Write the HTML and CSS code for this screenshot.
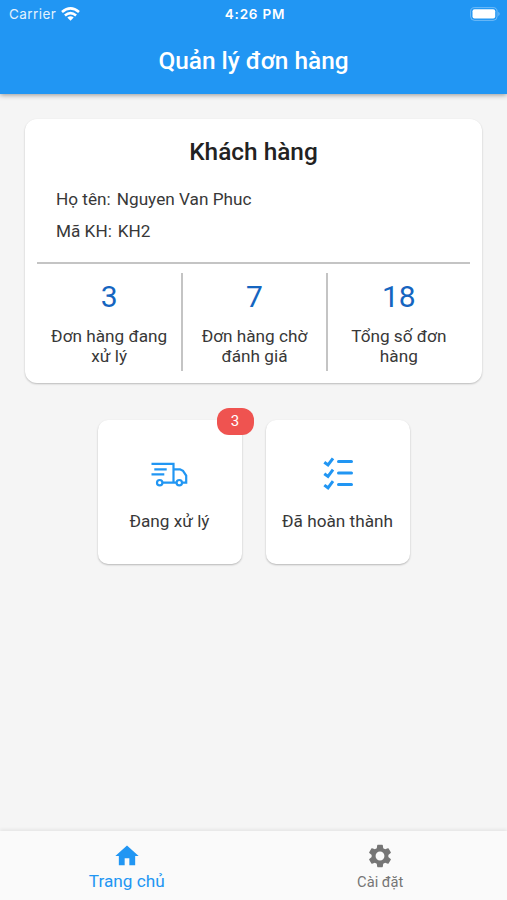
FILE: index.html
```html
<!DOCTYPE html>
<html lang="vi">
<head>
<meta charset="utf-8">
<meta name="viewport" content="width=device-width, initial-scale=1">
<title>Quản lý đơn hàng</title>
<link rel="stylesheet" href="styles.css">
</head>
<body>
<div class="app">
  <header class="header">
    <div class="status">
      <div class="carrier"><span>Carrier</span>
        <svg width="19" height="14" viewBox="0 0 19 14" fill="none" stroke="#fff" stroke-width="2.600"><path d="M1 5.100Q9.500-2.200 18 5.100M3.900 8.400Q9.500 3.700 15.100 8.400"/><path d="M6.300 10.500Q9.500 7.800 12.700 10.500L9.500 13.800z" fill="#fff" stroke="none"/></svg>
      </div>
      <span class="time">4:26 PM</span>
      <svg class="battery" width="31" height="14" viewBox="0 0 31 14"><rect x=".6" y=".6" width="26.500" height="12.800" rx="4" fill="none" stroke="#fff" stroke-opacity=".35"/><rect x="2.500" y="2.300" width="22.700" height="9.300" rx="2" fill="#fff"/><path d="M28.500 4.800q2 2.200 0 4.400z" fill="#fff" fill-opacity=".5"/></svg>
    </div>
    <h1 class="title">Quản lý đơn hàng</h1>
  </header>
  <main class="main">
    <section class="card">
      <h2 class="card-title">Khách hàng</h2>
      <p class="info"><span>Họ tên:</span><span>Nguyen Van Phuc</span></p>
      <p class="info"><span>Mã KH:</span><span>KH2</span></p>
      <div class="stats">
        <div class="stat"><div class="num">3</div><div class="label">Đơn hàng đang<br>xử lý</div></div>
        <div class="stat"><div class="num">7</div><div class="label">Đơn hàng chờ<br>đánh giá</div></div>
        <div class="stat"><div class="num">18</div><div class="label">Tổng số đơn<br>hàng</div></div>
      </div>
    </section>
    <div class="tiles">
      <div class="tile">
        <span class="badge">3</span>
        <svg width="38" height="36" viewBox="151 455 38 36" fill="none" stroke="#2196f3" stroke-width="2.200"><path d="M151.500 463.800H173.500V482.700H162.800M154.300 469.400H166.700M151.500 474.400H164.300M173.500 469.300H180L183 470.900L186.200 475.700V482.700H182.500M173.500 482.700H176"/><circle cx="159.700" cy="482.700" r="2.700"/><circle cx="179.300" cy="482.700" r="2.700"/></svg>
        <span class="tile-label">Đang xử lý</span>
      </div>
      <div class="tile">
        <svg width="38" height="36" viewBox="319 455 38 36" fill="none" stroke="#2196f3" stroke-width="3" stroke-linecap="round"><path d="M338.500 461.600H351.500M338.500 473H351.500M338.500 484.400H351.500"/><path stroke-linecap="butt" d="M324.300 462.300L328 465L333 458.300M324.300 473.700L328 476.400L333 469.700M324.300 485.100L328 487.800L333 481.100"/></svg>
        <span class="tile-label">Đã hoàn thành</span>
      </div>
    </div>
  </main>
  <nav class="tabs">
    <div class="tab active">
      <svg width="28" height="28" viewBox="0 0 24 24" fill="currentColor"><path d="M10 20v-6h4v6h5v-8h3L12 3 2 12h3v8z"/></svg>
      <span>Trang chủ</span>
    </div>
    <div class="tab">
      <svg width="28" height="28" viewBox="0 0 24 24" fill="currentColor"><path d="M19.140 12.940c.04-.3.060-.61.060-.94 0-.32-.02-.64-.07-.94l2.030-1.580c.18-.14.230-.41.120-.61l-1.920-3.320c-.12-.22-.37-.29-.59-.22l-2.390.96c-.5-.38-1.030-.7-1.620-.94l-.36-2.540c-.04-.24-.24-.41-.48-.41h-3.840c-.24 0-.43.170-.47.410l-.36 2.540c-.59.240-1.130.570-1.620.940l-2.390-.96c-.22-.08-.47 0-.59.220L2.740 8.870c-.12.210-.08.470.120.610l2.030 1.580c-.05.300-.09.630-.09.940s.02.640.070.940l-2.030 1.580c-.18.140-.23.410-.12.610l1.920 3.320c.12.220.37.290.59.220l2.390-.96c.5.380 1.030.7 1.620.940l.36 2.540c.05.240.24.410.48.410h3.840c.24 0 .44-.17.470-.41l.36-2.540c.59-.24 1.130-.56 1.620-.94l2.390.96c.22.080.47 0 .59-.22l1.920-3.320c.12-.22.070-.47-.12-.61l-2.010-1.580zM12 15.800A3.800 3.800 0 1 1 12 8.200A3.800 3.800 0 0 1 12 15.800z"/></svg>
      <span>Cài đặt</span>
    </div>
  </nav>
</div>
</body>
</html>
```
FILE: styles.css
```css
* { box-sizing: border-box; }
body { margin: 0; font-family: Roboto, "Liberation Sans", sans-serif; color: #383838; }
h1, h2, p { margin: 0; }
svg { display: block; flex: none; }
.app { height: 900px; display: flex; flex-direction: column; background: #f5f5f5; overflow: hidden; }
.header { height: 94px; background: #2196f3; color: #fff; box-shadow: 0 1px 5px rgba(0,0,0,.4); }
.status { height: 27px; display: grid; grid-template-columns: 1fr auto 1fr; align-items: center; padding: 0 6px 0 9px; font-family: Inter, sans-serif; font-size: 13.500px; }
.carrier { display: flex; align-items: center; gap: 5px; letter-spacing: .45px; color: #e3f2fd; }
.time { font-weight: 600; letter-spacing: .8px; }
.battery { justify-self: end; }
.title { text-align: center; font-size: 24.400px; line-height: 32px; font-weight: 500; margin-top: 18px; }
.main { flex: 1; padding: 25px 25px 0; }
.card { height: 264px; padding: 17px 12px 11px; background: #fff; border-radius: 12px; box-shadow: 0 1px 2px rgba(0,0,0,.24); }
.card-title { text-align: center; font-size: 24.400px; line-height: 32px; font-weight: 500; color: #222; }
.info { display: flex; gap: 6px; padding-left: 19px; font-size: 17.200px; line-height: 32px; }
.card-title + .info { margin-top: 15px; }
.stats { display: grid; grid-template-columns: repeat(3, 1fr); margin-top: 15px; padding-top: 9px; border-top: 2px solid #c4c4c4; }
.stat { height: 98px; text-align: center; padding-top: 6px; }
.stat + .stat { border-left: 2px solid #c4c4c4; }
.num { font-size: 30px; line-height: 36px; color: #1565c0; }
.label { margin-top: 12px; font-size: 17.200px; line-height: 19.500px; white-space: nowrap; }
.tiles { display: flex; justify-content: center; gap: 24px; margin-top: 37px; }
.tile { position: relative; width: 144px; height: 144px; padding-top: 35px; display: flex; flex-direction: column; align-items: center; background: #fff; border-radius: 10px; box-shadow: 0 1px 2px rgba(0,0,0,.26); }
.tile-label { margin-top: 20px; font-size: 17.200px; line-height: 20px; white-space: nowrap; }
.badge { position: absolute; top: -12px; right: -12px; width: 37px; height: 27px; border-radius: 12px; background: #ef5350; color: #fff; font-size: 15px; line-height: 27px; text-align: center; }
.tabs { height: 69px; display: flex; background: #fafafa; box-shadow: 0 -2px 3px rgba(0,0,0,.06); }
.tab { flex: 1; display: flex; flex-direction: column; align-items: center; padding-top: 11px; color: #757575; font-size: 14.700px; line-height: 22px; }
.tab span { margin-top: 1px; }
.tab.active { color: #2196f3; font-size: 17.200px; }
.tab.active span { margin-top: 0; }
```
